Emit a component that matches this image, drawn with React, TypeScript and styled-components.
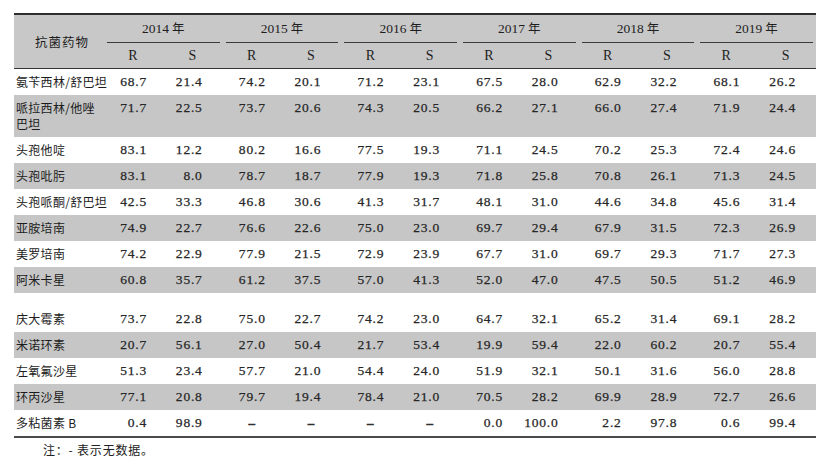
import React from "react";
import styled, { createGlobalStyle } from "styled-components";

type Row = { name: string; values: string[] };

const years = ["2014", "2015", "2016", "2017", "2018", "2019"];

const firstGroup: Row[] = [
  { name: "氨苄西林/舒巴坦", values: ["68.7", "21.4", "74.2", "20.1", "71.2", "23.1", "67.5", "28.0", "62.9", "32.2", "68.1", "26.2"] },
  { name: "哌拉西林/他唑\n巴坦", values: ["71.7", "22.5", "73.7", "20.6", "74.3", "20.5", "66.2", "27.1", "66.0", "27.4", "71.9", "24.4"] },
  { name: "头孢他啶", values: ["83.1", "12.2", "80.2", "16.6", "77.5", "19.3", "71.1", "24.5", "70.2", "25.3", "72.4", "24.6"] },
  { name: "头孢吡肟", values: ["83.1", "8.0", "78.7", "18.7", "77.9", "19.3", "71.8", "25.8", "70.8", "26.1", "71.3", "24.5"] },
  { name: "头孢哌酮/舒巴坦", values: ["42.5", "33.3", "46.8", "30.6", "41.3", "31.7", "48.1", "31.0", "44.6", "34.8", "45.6", "31.4"] },
  { name: "亚胺培南", values: ["74.9", "22.7", "76.6", "22.6", "75.0", "23.0", "69.7", "29.4", "67.9", "31.5", "72.3", "26.9"] },
  { name: "美罗培南", values: ["74.2", "22.9", "77.9", "21.5", "72.9", "23.9", "67.7", "31.0", "69.7", "29.3", "71.7", "27.3"] },
  { name: "阿米卡星", values: ["60.8", "35.7", "61.2", "37.5", "57.0", "41.3", "52.0", "47.0", "47.5", "50.5", "51.2", "46.9"] },
];

const secondGroup: Row[] = [
  { name: "庆大霉素", values: ["73.7", "22.8", "75.0", "22.7", "74.2", "23.0", "64.7", "32.1", "65.2", "31.4", "69.1", "28.2"] },
  { name: "米诺环素", values: ["20.7", "56.1", "27.0", "50.4", "21.7", "53.4", "19.9", "59.4", "22.0", "60.2", "20.7", "55.4"] },
  { name: "左氧氟沙星", values: ["51.3", "23.4", "57.7", "21.0", "54.4", "24.0", "51.9", "32.1", "50.1", "31.6", "56.0", "28.8"] },
  { name: "环丙沙星", values: ["77.1", "20.8", "79.7", "19.4", "78.4", "21.0", "70.5", "28.2", "69.9", "28.9", "72.7", "26.6"] },
  { name: "多粘菌素 B", values: ["0.4", "98.9", "-", "-", "-", "-", "0.0", "100.0", "2.2", "97.8", "0.6", "99.4"] },
];

const GlobalStyle = createGlobalStyle`
  html, body {
    margin: 0;
    padding: 0;
    background: #ffffff;
  }
  body {
    font-family: "Liberation Serif", "Noto Sans CJK SC", serif;
    color: #222222;
  }
`;

const Page = styled.div`
  padding: 13px 14px 0 14px;
  width: 830px;
  box-sizing: border-box;
`;

const Table = styled.table`
  width: 802px;
  table-layout: fixed;
  border-collapse: collapse;
  border-top: 2px solid #2e2e2e;
  border-bottom: 2px solid #4a4a4a;
`;

const Head = styled.thead`
  background: #c8c8c8;
  border-bottom: 1.5px solid #333333;
`;

const NameHead = styled.th`
  font-family: "Noto Sans CJK SC", sans-serif;
  font-weight: 400;
  font-size: 12.5px;
  letter-spacing: 1px;
  text-align: center;
  vertical-align: middle;
  color: #1e1e1e;
  padding: 0 0 0 6px;
`;

const YearHead = styled.th`
  padding: 0;
  height: 26px;
  font-weight: 400;
  vertical-align: bottom;
`;

const YearLabel = styled.div`
  font-size: 13.5px;
  line-height: 26px;
  margin: 0 3px;
  border-bottom: 1px solid #3a3a3a;
  color: #1e1e1e;

  span {
    font-family: "Noto Sans CJK SC", sans-serif;
    font-size: 12.5px;
    margin-left: 3px;
  }
`;

const SubHead = styled.th`
  height: 25px;
  padding: 0;
  font-weight: 400;
  font-size: 14px;
  text-align: center;
  color: #1e1e1e;
`;

const BodyRow = styled.tr<{ $shade: boolean }>`
  background: ${(p) => (p.$shade ? "#c6c6c6" : "#ffffff")};
`;

const Spacer = styled.tr`
  height: 13px;
`;

const NameCell = styled.td`
  font-family: "Noto Sans CJK SC", sans-serif;
  font-size: 12px;
  letter-spacing: 0.3px;
  line-height: 16px;
  color: #1c1c1c;
  padding: 5px 0 5px 2px;
  height: 16px;
  vertical-align: top;
  white-space: pre;
  overflow: visible;
`;

const NumCell = styled.td<{ $pad: number }>`
  font-size: 13.5px;
  letter-spacing: 0.8px;
  line-height: 16px;
  color: #262626;
  -webkit-text-stroke: 0.25px #262626;
  padding: 5px ${(p) => p.$pad}px 5px 0;
  text-align: right;
  vertical-align: top;
  white-space: nowrap;
`;

const DashCell = styled.td`
  padding: 5px 0;
  vertical-align: top;
  text-align: center;
  line-height: 16px;
  font-size: 13px;
  font-weight: 700;
  color: #2a2a2a;
  -webkit-text-stroke: 0.4px #2a2a2a;
`;

const Note = styled.div`
  font-family: "Noto Sans CJK SC", sans-serif;
  font-size: 12px;
  letter-spacing: 0.8px;
  color: #222222;
  padding: 5px 0 0 29px;
  line-height: 14px;
`;

const DataRows = ({ rows }: { rows: Row[] }) => (
  <>
    {rows.map((r, i) => (
      <BodyRow key={r.name} $shade={i % 2 === 1}>
        <NameCell>{r.name}</NameCell>
        {r.values.map((v, j) =>
          v === "-" ? (
            <DashCell key={j}>–</DashCell>
          ) : (
            <NumCell key={j} $pad={j % 2 === 0 ? 15 : 20}>
              {v}
            </NumCell>
          )
        )}
      </BodyRow>
    ))}
  </>
);

export default function App() {
  return (
    <Page>
      <GlobalStyle />
      <Table>
        <colgroup>
          <col style={{ width: 90 }} />
          {years.map((y) => (
            <React.Fragment key={y}>
              <col style={{ width: 58 }} />
              <col style={{ width: 60.6 }} />
            </React.Fragment>
          ))}
        </colgroup>
        <Head>
          <tr>
            <NameHead rowSpan={2}>抗菌药物</NameHead>
            {years.map((y) => (
              <YearHead key={y} colSpan={2}>
                <YearLabel>
                  {y}
                  <span>年</span>
                </YearLabel>
              </YearHead>
            ))}
          </tr>
          <tr>
            {years.map((y) => (
              <React.Fragment key={y}>
                <SubHead>R</SubHead>
                <SubHead>S</SubHead>
              </React.Fragment>
            ))}
          </tr>
        </Head>
        <tbody>
          <DataRows rows={firstGroup} />
          <Spacer>
            <td colSpan={13} />
          </Spacer>
          <DataRows rows={secondGroup} />
        </tbody>
      </Table>
      <Note>注：- 表示无数据。</Note>
    </Page>
  );
}
